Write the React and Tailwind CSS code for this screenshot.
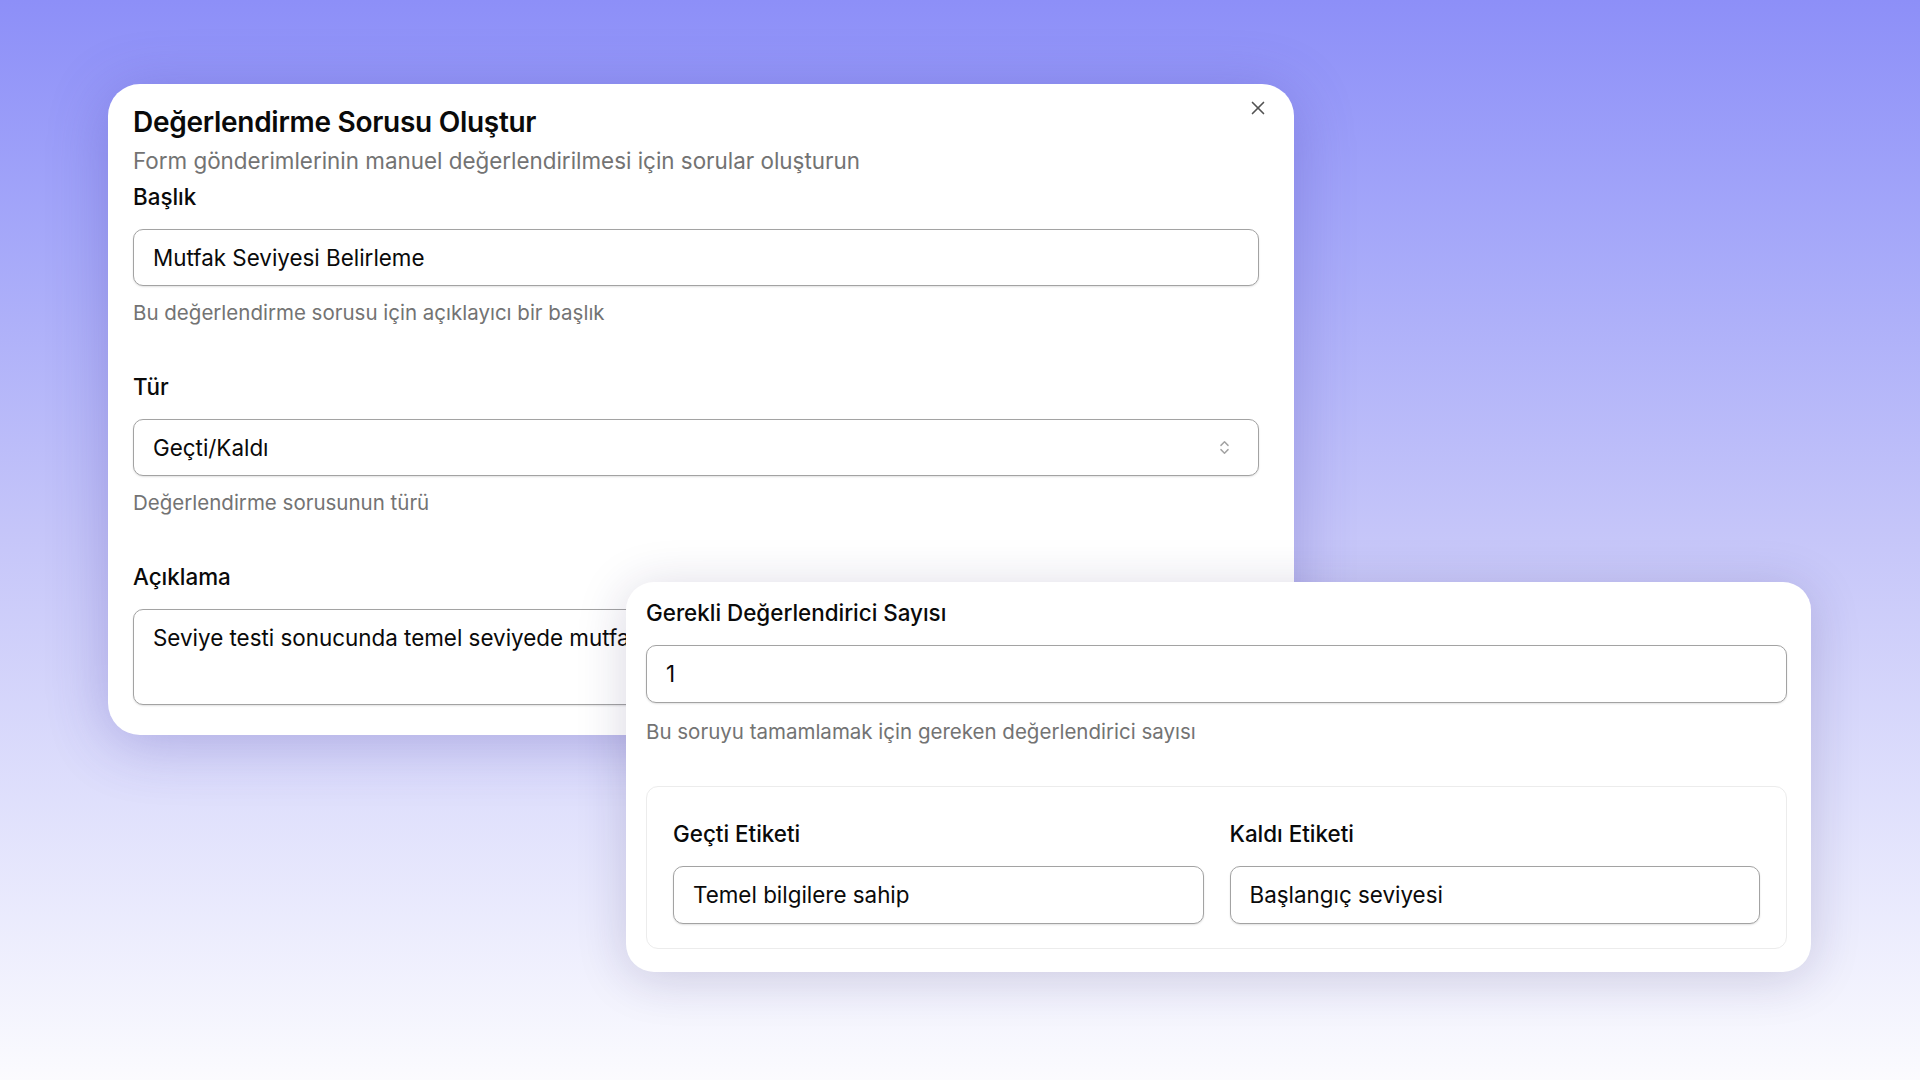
import { X, ChevronsUpDown } from "lucide-react";

const font = { fontFamily: "Inter, 'Noto Sans', sans-serif" };

const boxCls =
  "rounded-[10px] border border-[#a3a3a3] shadow-[0_1px_2px_rgba(0,0,0,0.12)] bg-white text-[22.4px] text-[#0a0a0a]";

const Field = ({ label, value, help, className = "", h = "h-[57px]", helpGap = "mt-[13px]", children }) => (
  <div className={className}>
    <div className="text-[22.4px] leading-[32px] font-medium text-[#0a0a0a]">{label}</div>
    {children || (
      <div className={`mt-[16px] ${h} ${boxCls} px-[19px] flex items-center`}>{value}</div>
    )}
    {help && <div className={`${helpGap} text-[20.5px] leading-[28px] text-[#737373]`}>{help}</div>}
  </div>
);

export default function App() {
  return (
    <div
      className="relative w-[1920px] h-[1080px] overflow-hidden bg-gradient-to-b from-[#8d8ff8] via-[#c6c6f9] to-[#fbfbfe]"
      style={font}
    >
      {/* main dialog */}
      <div className="absolute left-[108px] top-[84px] w-[1186px] h-[651px] bg-white rounded-[32px] shadow-[0_8px_60px_rgba(70,60,170,0.3)] pl-[25px] pr-[35px] pt-[20px]">
        <button className="absolute right-[25px] top-[13px] text-[#525252]" aria-label="Close">
          <X className="w-[22px] h-[22px]" strokeWidth={1.8} />
        </button>
        <div className="text-[28px] leading-[36px] font-semibold tracking-[-0.01em] text-[#0a0a0a]">
          Değerlendirme Sorusu Oluştur
        </div>
        <div className="mt-[5px] text-[22.4px] leading-[32px] text-[#737373]">
          Form gönderimlerinin manuel değerlendirilmesi için sorular oluşturun
        </div>
        <Field
          className="mt-[4px]"
          label="Başlık"
          value="Mutfak Seviyesi Belirleme"
          help="Bu değerlendirme sorusu için açıklayıcı bir başlık"
        />
        <Field className="mt-[44px]" label="Tür" help="Değerlendirme sorusunun türü">
          <div className={`mt-[16px] h-[57px] ${boxCls} pl-[19px] pr-[25px] flex items-center justify-between`}>
            <span>Geçti/Kaldı</span>
            <ChevronsUpDown className="w-[17px] h-[17px] text-[#a3a3a3]" strokeWidth={2} />
          </div>
        </Field>
        <Field className="mt-[44px]" label="Açıklama">
          <div className={`mt-[16px] h-[96px] ${boxCls} px-[19px] pt-[12px] leading-[32px] whitespace-nowrap overflow-hidden`}>
            Seviye testi sonucunda temel seviyede mutfak bilgisine sahip olup olmadığını belirleyin
          </div>
        </Field>
      </div>

      {/* overlay card */}
      <div className="absolute left-[626px] top-[582px] w-[1185px] h-[390px] bg-white rounded-[28px] shadow-[0_6px_50px_rgba(40,30,90,0.18)] pl-[20px] pr-[24px] pt-[15px]">
        <Field
          label="Gerekli Değerlendirici Sayısı"
          value="1"
          h="h-[58px]"
          helpGap="mt-[15px]"
          help="Bu soruyu tamamlamak için gereken değerlendirici sayısı"
        />
        <div className="mt-[40px] h-[163px] rounded-[12px] border border-[#ececec] px-[26px] pt-[31px] grid grid-cols-2 gap-[26px]">
          <Field label="Geçti Etiketi" value="Temel bilgilere sahip" h="h-[58px]" />
          <Field label="Kaldı Etiketi" value="Başlangıç seviyesi" h="h-[58px]" />
        </div>
      </div>
    </div>
  );
}
